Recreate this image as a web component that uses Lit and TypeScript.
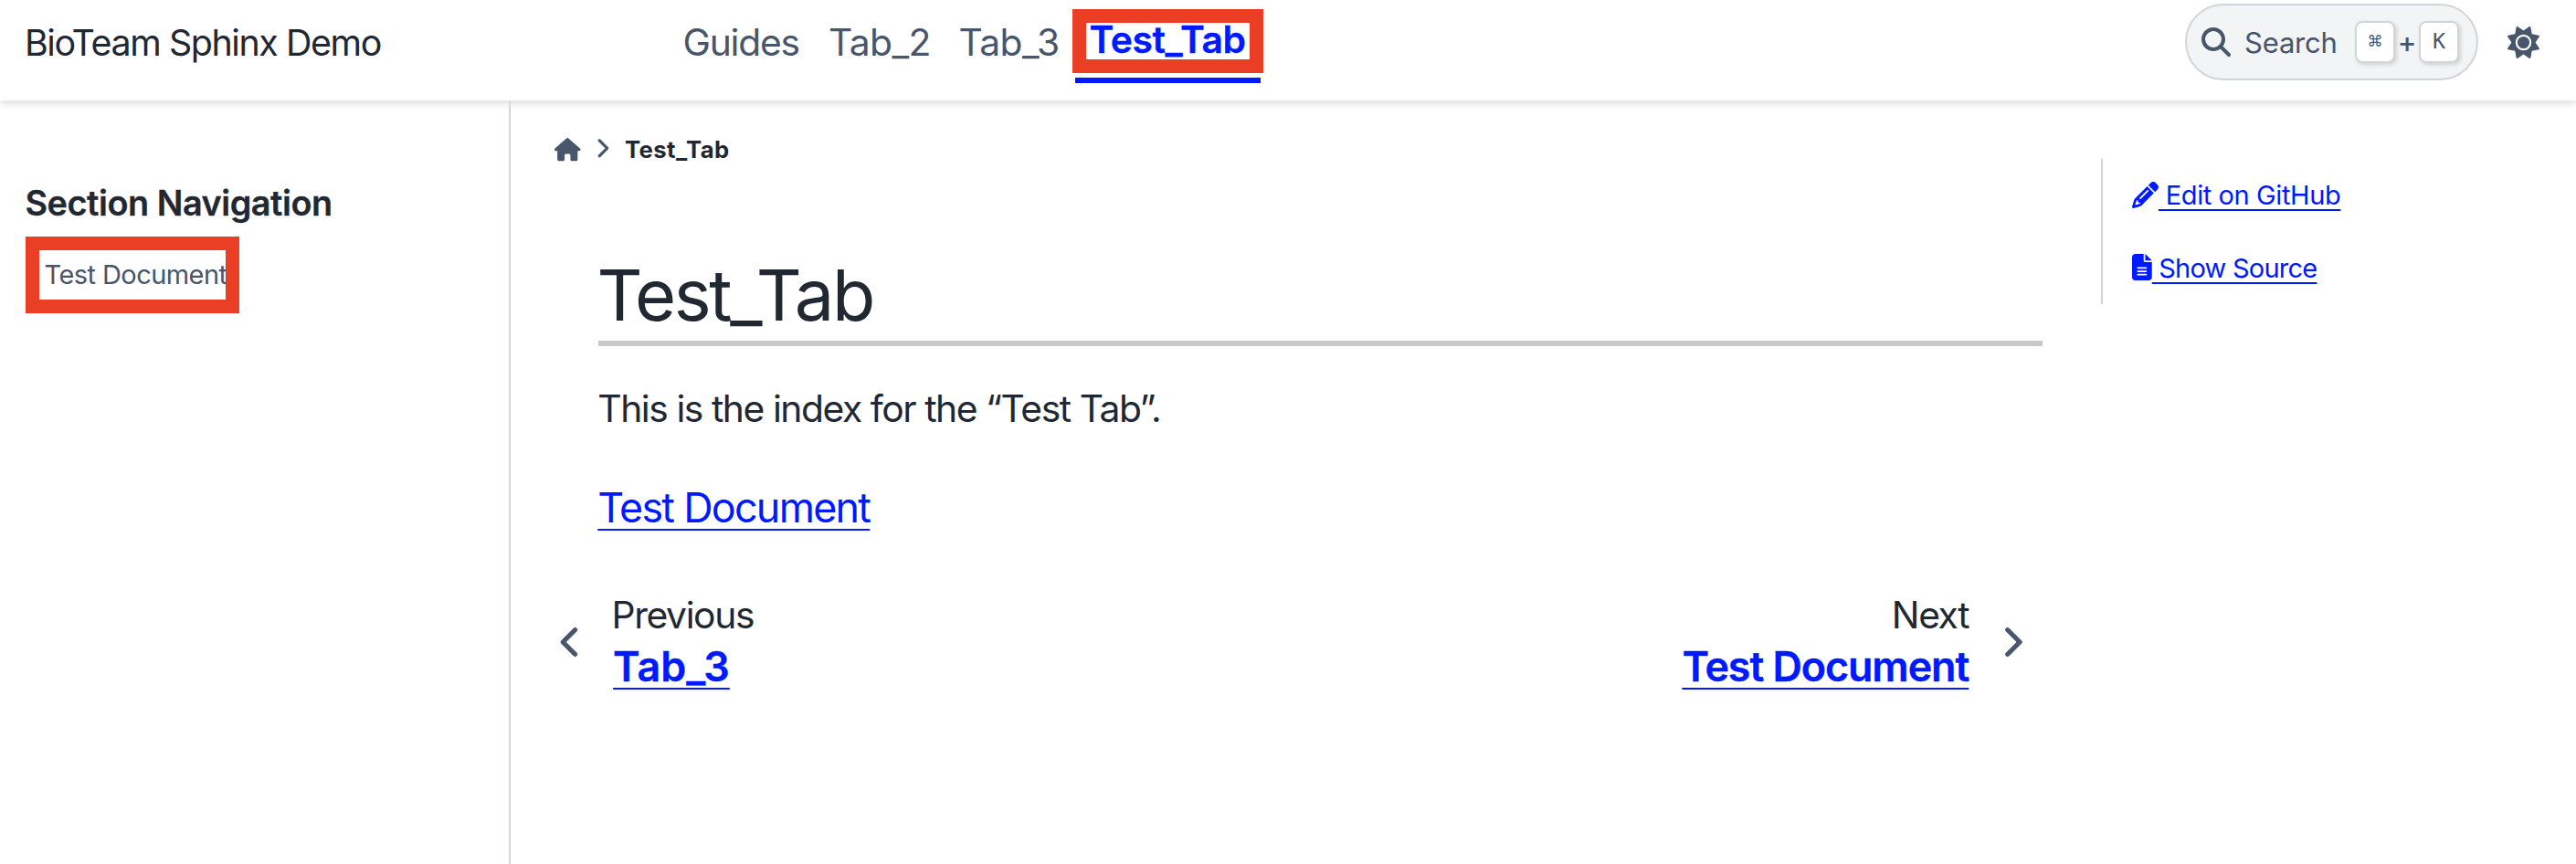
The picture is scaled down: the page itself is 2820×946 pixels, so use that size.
import { LitElement, html, css, svg } from "lit";
import { customElement } from "lit/decorators.js";

const ICONS: Record<string, [number, string]> = {
  sun: [512, "M361.5 1.2c5 2.1 8.6 6.6 9.6 11.9L391 121l107.9 19.8c5.3 1 9.8 4.6 11.9 9.6s1.5 10.7-1.6 15.2L446.9 256l62.3 90.3c3.1 4.5 3.7 10.2 1.6 15.2s-6.6 8.6-11.9 9.6L391 391 371.1 498.9c-1 5.3-4.6 9.8-9.6 11.9s-10.7 1.5-15.2-1.6L256 446.9l-90.3 62.3c-4.5 3.1-10.2 3.7-15.2 1.6s-8.6-6.6-9.6-11.9L121 391 13.1 371.1c-5.3-1-9.8-4.6-11.9-9.6s-1.5-10.7 1.6-15.2L65.1 256 2.8 165.7c-3.1-4.5-3.7-10.2-1.6-15.2s6.6-8.6 11.9-9.6L121 121 140.9 13.1c1-5.3 4.6-9.8 9.6-11.9s10.7-1.5 15.2 1.6L256 65.1 346.3 2.8c4.5-3.1 10.2-3.7 15.2-1.6zM160 256a96 96 0 1 1 192 0 96 96 0 1 1 -192 0zm224 0a128 128 0 1 0 -256 0 128 128 0 1 0 256 0z"],
  search: [512, "M416 208c0 45.9-14.9 88.3-40 122.7L502.6 457.4c12.5 12.5 12.5 32.8 0 45.3s-32.8 12.5-45.3 0L330.7 376c-34.4 25.2-76.8 40-122.7 40C93.1 416 0 322.9 0 208S93.1 0 208 0S416 93.1 416 208zM208 352a144 144 0 1 0 0-288 144 144 0 1 0 0 288z"],
  house: [576, "M575.8 255.5c0 18-15 32.1-32 32.1h-32l.7 160.2c0 2.7-.2 5.4-.5 8.1V472c0 22.1-17.9 40-40 40H456c-1.1 0-2.2 0-3.3-.1c-1.4 .1-2.8 .1-4.2 .1H416 392c-22.1 0-40-17.9-40-40V448 384c0-17.7-14.3-32-32-32H256c-17.7 0-32 14.3-32 32v64 24c0 22.1-17.9 40-40 40H160 128.1c-1.5 0-3-.1-4.5-.2c-1.2 .1-2.4 .2-3.6 .2H104c-22.1 0-40-17.9-40-40V360c0-.9 0-1.9 .1-2.8V287.6H32c-18 0-32-14-32-32.1c0-9 3-17 10-24L266.4 8c7-7 15-8 22-8s15 2 21 7L564.8 231.5c8 7 12 15 11 24z"],
  right: [320, "M310.6 233.4c12.5 12.5 12.5 32.8 0 45.3l-192 192c-12.5 12.5-32.8 12.5-45.3 0s-12.5-32.8 0-45.3L242.7 256 73.4 86.6c-12.5-12.5-12.5-32.8 0-45.3s32.8-12.5 45.3 0l192 192z"],
  left: [320, "M9.4 233.4c-12.5 12.5-12.5 32.8 0 45.3l192 192c12.5 12.5 32.8 12.5 45.3 0s12.5-32.8 0-45.3L77.3 256 246.6 86.6c12.5-12.5 12.5-32.8 0-45.3s-32.8-12.5-45.3 0l-192 192z"],
  pencil: [512, "M410.3 231l11.3-11.3-33.9-33.9-62.1-62.1L291.7 89.8l-11.3 11.3-22.6 22.6L58.6 322.9c-10.4 10.4-18 23.3-22.2 37.4L1 480.7c-2.5 8.4-.2 17.5 6.1 23.7s15.3 8.5 23.7 6.1l120.3-35.4c14.1-4.2 27-11.8 37.4-22.2L387.7 253.7 410.3 231zM160 399.4l-9.1 22.7c-4 3.1-8.5 5.4-13.3 6.9L59.4 452l23-78.1c1.4-4.9 3.8-9.4 6.9-13.3l22.7-9.1v32c0 8.8 7.2 16 16 16h32zM362.7 18.7L348.3 33.2 325.7 55.8 314.3 67.1l33.9 33.9 62.1 62.1 33.9 33.9 11.3-11.3 22.6-22.6 14.5-14.5c25-25 25-65.5 0-90.5L453.3 18.7c-25-25-65.5-25-90.5 0zm-47.4 168l-144 144c-6.2 6.2-16.4 6.2-22.6 0s-6.2-16.4 0-22.6l144-144c6.2-6.2 16.4-6.2 22.6 0s6.2 16.4 0 22.6z"],
  file: [384, "M64 0C28.7 0 0 28.7 0 64V448c0 35.3 28.7 64 64 64H320c35.3 0 64-28.7 64-64V160H256c-17.7 0-32-14.3-32-32V0H64zM256 0V128H384L256 0zM112 256H272c8.8 0 16 7.2 16 16s-7.2 16-16 16H112c-8.8 0-16-7.2-16-16s7.2-16 16-16zm0 64H272c8.8 0 16 7.2 16 16s-7.2 16-16 16H112c-8.8 0-16-7.2-16-16s7.2-16 16-16zm0 64H272c8.8 0 16 7.2 16 16s-7.2 16-16 16H112c-8.8 0-16-7.2-16-16s7.2-16 16-16z"],
};

const icon = (name: string) => html`<svg class="icon i-${name}" viewBox="0 0 ${ICONS[name][0]} 512" aria-hidden="true">${svg`<path d=${ICONS[name][1]}></path>`}</svg>`;

@customElement("app-root")
export class AppRoot extends LitElement {
  static styles = css`
    :host {
      display: block;
      height: 946px;
      overflow: hidden;
      background: #fff;
      color: #222832;
      font-family: Inter, "Liberation Sans", sans-serif;
    }
    * { box-sizing: border-box; }
    a { color: #001aff; text-decoration: none; white-space: pre; }
    h1, h2, p { margin: 0; font-weight: 400; }
    .icon { display: block; flex: none; fill: currentColor; }

    .header {
      position: relative;
      z-index: 2;
      display: flex;
      align-items: flex-start;
      height: 110px;
      padding: 0 40px 0 27px;
      background: #fff;
      box-shadow: 0 4px 8px 0 #e0e0e0;
    }
    .header .brand {
      width: 719.5px;
      color: #222832;
      font-size: 39.4px;
      line-height: 94px;
      letter-spacing: -1.42px;
    }
    .tabs { display: grid; margin-left: 1px; grid-template-columns: 159.5px 142.5px 127.5px 203px; }
    .tabs a { color: #48566b; font-size: 40.8px; line-height: 92px; letter-spacing: -0.6px; }
    .tabs .guides { letter-spacing: -1.25px; }
    .tabs .active {
      position: relative;
      height: 91px;
      padding: 1px 0 0 15.5px;
      border-bottom: 6px solid #001aff;
      color: #001aff;
      font-weight: 600;
      -webkit-text-stroke: 0.4px #001aff;
      line-height: 84px;
      letter-spacing: -0.41px;
    }
    .mark { position: absolute; border: 15px solid #eb3f25; pointer-events: none; }
    .mark-tab { left: -3px; top: 10px; width: 209px; height: 70px; }
    .mark-doc { inset: 0; }

    .search {
      display: flex;
      align-items: center;
      width: 321px;
      height: 84px;
      margin: 4px 32px 0 auto;
      padding: 0 19px 0 16px;
      border: 2px solid #d1d5da;
      border-radius: 42px;
      background: #f3f4f5;
      color: #48566b;
    }
    .i-search { width: 32px; height: 32px; margin-bottom: 1px; }
    .search .label { width: 136px; padding-left: 15px; line-height: 82px; font-size: 31px; letter-spacing: -0.19px; padding-top: 1px; }
    .kbd {
      display: flex;
      justify-content: center;
      width: 44px;
      height: 46px;
      border: 2px solid #d1d5da;
      border-radius: 8px;
      background: #fff;
      box-shadow: 2px 2px 4px #d1d1d1;
      font-family: "DejaVu Sans Mono", monospace;
      font-size: 23.5px;
      line-height: 41px;
    }
    .kbd.cmd { font-family: "DejaVu Sans", sans-serif; font-size: 17px; line-height: 40px; }
    .plus { width: 26px; text-align: center; font-size: 31px; font-weight: 500; line-height: 40px; }
    .i-sun { width: 35px; height: 35px; margin-top: 29px; color: #48566b; }

    .page { display: flex; height: 836px; }
    .sidebar { width: 559px; padding: 89px 0 0 27.5px; border-right: 2px solid #d1d5da; }
    .sidebar h2 { font-size: 37.8px; font-weight: 600; line-height: 46px; letter-spacing: -0.46px; -webkit-text-stroke: 0.3px #222832; }
    .sidebar .entry { position: relative; width: 234px; height: 84px; margin: 14px 0 0 0.5px; padding-left: 20.5px; }
    .entry a { color: #48566b; font-size: 29px; line-height: 83px; letter-spacing: -0.57px; }

    .content { width: 1741px; padding: 39px 64px 0 48px; }
    .crumbs { display: flex; align-items: center; height: 30px; font-size: 25.7px; font-weight: 700; letter-spacing: 0.42px; line-height: 30px; }
    .crumbs .icon { color: #48566b; }
    .i-house { width: 28.5px; height: 25.4px; }
    .i-right, .i-left { stroke: currentColor; stroke-width: 12; overflow: visible; }
    .crumbs .i-right { width: 14.1px; height: 22.6px; margin: 0 18.2px 3px 16.2px; }
    .article { padding-left: 48px; }
    h1 { margin-top: 101.5px; padding-bottom: 8.5px; border-bottom: 6px solid #c9c9c9; font-size: 77.5px; line-height: 84px; letter-spacing: -2.4px; text-indent: -1.5px; }
    .article p { font-size: 40.8px; line-height: 60px; letter-spacing: -1.45px; margin-top: 38px; text-indent: -0.7px; }
    .article .toc { margin-top: 48.7px; font-size: 44.8px; letter-spacing: -1.71px; }
    .u { text-decoration: underline 2px; text-underline-offset: 7px; text-decoration-skip-ink: none; }

    .pager { display: flex; align-items: center; margin: 62.3px 22.6px 0 6.8px; }
    .pager .icon { width: 22.4px; height: 36px; margin-bottom: 4px; color: #48566b; }
    .pager .prev { flex: 1; padding-left: 33.4px; }
    .pager .next { padding-right: 35.8px; text-align: right; }
    .pager .hint { font-size: 40.8px; line-height: 50px; letter-spacing: -1.4px; }
    .pager .title { font-size: 44.8px; height: 63.4px; line-height: 65.4px; font-weight: 600; letter-spacing: -1.05px; -webkit-text-stroke: 0.4px #001aff; }
    .pager .prev .title { padding-left: 1.5px; letter-spacing: 0.05px; }

    .aside {
      align-self: flex-start;
      display: grid;
      gap: 40px;
      margin-top: 64px;
      padding: 19.5px 0 19.5px 32px;
      border-left: 2px solid #d1d5da;
    }
    .aside .row { display: flex; align-items: center; color: #001aff; font-size: 29px; line-height: 40px; height: 40px; }
    .aside .u { text-underline-offset: 5px; letter-spacing: -0.4px; }
    .aside .source .u { letter-spacing: -0.75px; }
    .i-pencil { width: 29px; height: 29px; }
    .i-file { width: 21.75px; height: 29px; margin-bottom: 2px; }
  `;

  render() {
    return html`
      <header class="header">
        <a class="brand">BioTeam Sphinx Demo</a>
        <nav class="tabs">
          <a class="guides">Guides</a><a>Tab_2</a><a>Tab_3</a>
          <a class="active">Test_Tab<span class="mark mark-tab"></span></a>
        </nav>
        <div class="search">
          ${icon("search")}<span class="label">Search</span>
          <span class="kbd cmd">⌘</span><span class="plus">+</span><span class="kbd">K</span>
        </div>
        ${icon("sun")}
      </header>
      <div class="page">
        <aside class="sidebar">
          <h2>Section Navigation</h2>
          <div class="entry"><a>Test Document</a><span class="mark mark-doc"></span></div>
        </aside>
        <main class="content">
          <div class="crumbs">${icon("house")}${icon("right")}<span>Test_Tab</span></div>
          <section class="article">
            <h1>Test_Tab</h1>
            <p>This is the index for the “Test Tab”.</p>
            <p class="toc"><a class="u">Test Document</a></p>
          </section>
          <div class="pager">
            ${icon("left")}
            <div class="prev"><div class="hint">Previous</div><div class="title"><a class="u">Tab_3</a></div></div>
            <div class="next"><div class="hint">Next</div><div class="title"><a class="u">Test Document</a></div></div>
            ${icon("right")}
          </div>
        </main>
        <aside class="aside">
          <div class="row">${icon("pencil")}<a class="u"> Edit on GitHub</a></div>
          <div class="row source">${icon("file")}<a class="u"> Show Source</a></div>
        </aside>
      </div>
    `;
  }
}
